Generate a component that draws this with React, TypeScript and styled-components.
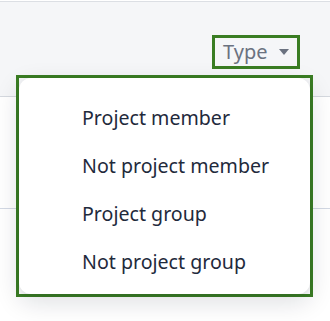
import React from 'react';
import styled, { createGlobalStyle } from 'styled-components';

const GlobalStyle = createGlobalStyle`
  html, body {
    margin: 0;
    padding: 0;
    background: #ffffff;
  }
  body {
    font-family: 'Noto Sans', 'Open Sans', sans-serif;
  }
`;

const Page = styled.div`
  position: relative;
  width: 330px;
  height: 321px;
  overflow: hidden;
  padding-top: 1px;
  box-sizing: border-box;
`;

const Header = styled.div`
  height: 96px;
  background: #f5f6f8;
  border-top: 1px solid #dcdfe4;
  border-bottom: 1px solid #d5d9df;
  display: flex;
  justify-content: flex-end;
  align-items: flex-start;
  padding: 33px 30px 0 0;
  box-sizing: border-box;
`;

const Row = styled.div`
  height: 112px;
  border-bottom: 1px solid #d3d9e4;
  box-sizing: border-box;
`;

const Highlight = styled.div`
  border: 3px solid #3a7d23;
  box-sizing: border-box;
`;

const TypeButton = styled(Highlight)`
  width: 88px;
  height: 34px;
  display: flex;
  align-items: center;
  padding-left: 8px;
  padding-bottom: 1px;
  gap: 11px;
  color: #6b7280;
  font-size: 20px;
  cursor: pointer;
`;

const Caret = styled.span`
  width: 0;
  height: 0;
  border-left: 5px solid transparent;
  border-right: 5px solid transparent;
  border-top: 6px solid #6b7280;
  margin-top: 1px;
`;

const MenuFrame = styled(Highlight)`
  position: absolute;
  left: 16px;
  top: 75px;
  width: 297px;
  height: 222px;
`;

const Menu = styled.ul`
  list-style: none;
  margin: 0;
  height: 100%;
  padding: 15px 0 0;
  box-sizing: border-box;
  background: #ffffff;
  border-radius: 12px;
  box-shadow: 0 8px 26px rgba(15, 23, 42, 0.14), 0 1px 4px rgba(15, 23, 42, 0.06);
`;

const Item = styled.li`
  height: 48px;
  display: flex;
  align-items: center;
  padding-left: 63px;
  font-size: 19.6px;
  color: #1f2a3c;
`;

const options = ['Project member', 'Not project member', 'Project group', 'Not project group'];

export default function App() {
  return (
    <Page>
      <GlobalStyle />
      <Header>
        <TypeButton>
          Type <Caret />
        </TypeButton>
      </Header>
      <Row />
      <MenuFrame>
        <Menu>
          {options.map(o => (
            <Item key={o}>{o}</Item>
          ))}
        </Menu>
      </MenuFrame>
    </Page>
  );
}
